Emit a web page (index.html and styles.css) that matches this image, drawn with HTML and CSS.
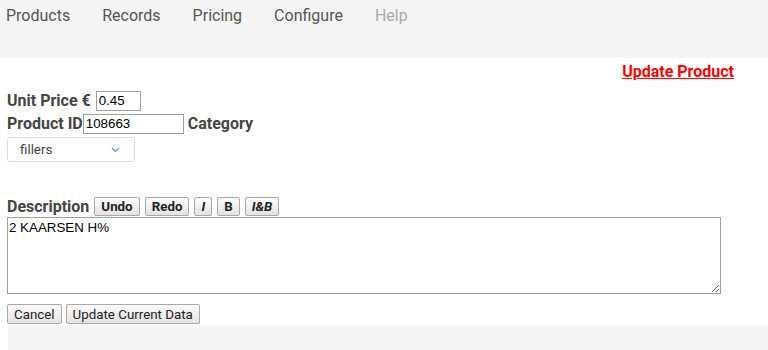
FILE: index.html
```html
<!DOCTYPE html>
<html lang="en">
<head>
    <meta charset="UTF-8">
    <title>Update Product</title>
    <link rel="stylesheet" href="styles.css">
</head>
<body>
<div class="topbar">
    <a class="nav-item">Products</a>
    <a class="nav-item">Records</a>
    <a class="nav-item">Pricing</a>
    <a class="nav-item">Configure</a>
    <a class="nav-item disabled">Help</a>
</div>

<div class="content">
    <div class="title-row">
        <a class="page-title">Update Product</a>
    </div>

    <div class="field-row price-row">
        <label class="lbl">Unit Price €</label>
        <input class="txt price" type="text" value="0.45">
    </div>
    <div class="field-row id-row">
        <label class="lbl">Product ID</label>
        <input class="txt pid" type="text" value="108663">
        <label class="lbl cat">Category</label>
    </div>
    <div class="select-box">
        <span>fillers</span>
        <svg class="chev" width="9" height="6" viewBox="0 0 9 6">
            <path d="M1 1 L4.5 4.5 L8 1" fill="none" stroke="#5b8fd9" stroke-width="1.2"/>
        </svg>
    </div>

    <div class="desc-row">
        <label class="lbl">Description</label>
        <button class="tool">Undo</button>
        <button class="tool">Redo</button>
        <button class="tool ital">I</button>
        <button class="tool">B</button>
        <button class="tool ital">I&amp;B</button>
    </div>
    <textarea class="desc">2 KAARSEN H%</textarea>

    <div class="actions">
        <button class="btn">Cancel</button>
        <button class="btn">Update Current Data</button>
    </div>
</div>

<div class="footer"></div>
</body>
</html>
```

FILE: styles.css
```css
* {
    box-sizing: border-box;
}
body {
    margin: 0;
    background: #fff;
    font-family: Roboto, "Liberation Sans", sans-serif;
    color: #444;
}
/* top navigation */
.topbar {
    display: flex;
    gap: 32px;
    height: 58px;
    padding: 6px 0 0 6px;
    background: #f4f4f4;
}
.nav-item {
    font-size: 16px;
    line-height: 19px;
    color: #555;
}
.nav-item.disabled {
    color: #aaa;
}
/* form */
.content {
    padding: 0 7px;
}
.title-row {
    text-align: right;
    padding: 4px 27px 0 0;
    height: 31px;
    line-height: 19px;
}
.page-title {
    color: #f00;
    font-weight: bold;
    font-size: 16px;
    text-decoration: underline;
}
.lbl {
    font-weight: bold;
    font-size: 16px;
    color: #444;
}
.field-row {
    display: flex;
    align-items: center;
    height: 23px;
}
.price-row .lbl {
    margin-right: 5px;
}
.id-row .cat {
    margin-left: 4px;
}
.txt {
    height: 20px;
    padding: 0 2px;
    border: 1px solid #a0a0a0;
    font-family: "Liberation Sans", Arial, sans-serif;
    font-size: 13.33px;
    color: #000;
}
.price {
    width: 45px;
}
.pid {
    width: 101px;
}
.select-box {
    display: flex;
    align-items: center;
    justify-content: space-between;
    width: 128px;
    height: 25px;
    margin-top: 2px;
    padding: 0 14px 0 12px;
    border: 1px solid #ddd;
    border-radius: 3px;
    font-size: 13.33px;
    color: #444;
}
.desc-row {
    display: flex;
    align-items: center;
    gap: 5px;
    height: 22px;
    margin-top: 33px;
}
.tool, .btn {
    height: 19px;
    padding: 0 6px;
    border: 1px solid #a8a8a8;
    border-radius: 2px;
    background: linear-gradient(#fbfbfb, #e4e4e4);
    font-family: Roboto, "Liberation Sans", sans-serif;
    font-size: 13.33px;
    color: #222;
}
.tool {
    font-weight: bold;
}
.tool.ital {
    font-style: italic;
}
.desc {
    display: block;
    width: 714px;
    height: 77px;
    margin: 0;
    padding: 2px 1px;
    border: 1px solid #a0a0a0;
    font-family: "Liberation Sans", Arial, sans-serif;
    font-size: 13.33px;
    color: #000;
}
.actions {
    display: flex;
    gap: 4px;
    margin-top: 10px;
}
.btn {
    height: 20px;
}
.footer {
    height: 25px;
    margin: 1px 0 0 8px;
    background: #f4f4f4;
}
```
